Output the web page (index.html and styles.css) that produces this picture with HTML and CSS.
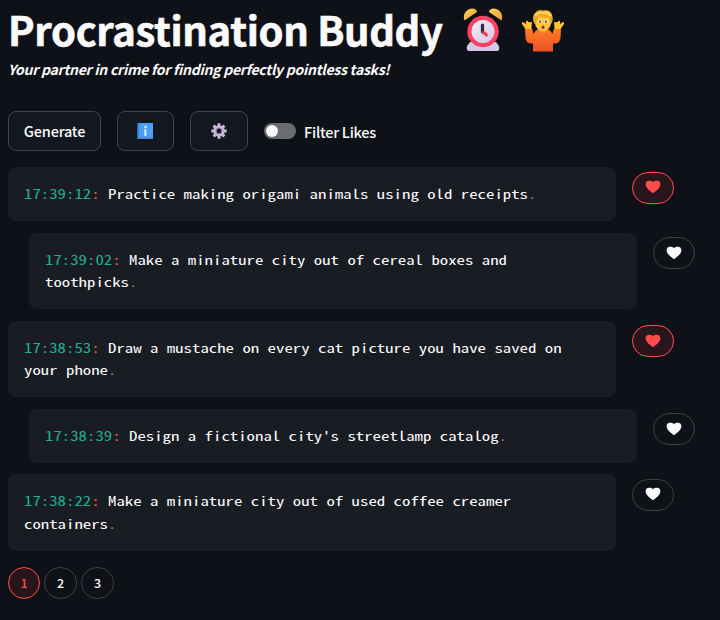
FILE: index.html
```html
<!DOCTYPE html>
<html lang="en">
<head>
<meta charset="utf-8">
<title>Procrastination Buddy</title>
<link rel="stylesheet" href="styles.css">
</head>
<body>
<svg class="defs" width="0" height="0" aria-hidden="true">
  <symbol id="heart" viewBox="0 0 16 14"><path d="M8 13.200C6.800 12 .6 8.600 .6 4.200C.6 1.900 2.200 .8 4 .8C5.800 .8 7.200 1.200 8 2.200C8.800 1.200 10.200 .8 12 .8C13.800 .8 15.400 1.900 15.400 4.200C15.400 8.600 9.200 12 8 13.200Z" fill="currentColor"/></symbol>
</svg>
<header class="header">
  <h1 class="title"><span class="title-text">Procrastination Buddy</span>
    <svg class="clock" viewBox="0 0 40 44">
      <defs>
        <linearGradient id="gold" x1="0" y1="0" x2="1" y2="1"><stop offset="0" stop-color="#ffd55a"/><stop offset="1" stop-color="#e99b32"/></linearGradient>
        <linearGradient id="face" x1="0" y1="0" x2="1" y2="1"><stop offset="0" stop-color="#f5eefb"/><stop offset="1" stop-color="#d3c3df"/></linearGradient>
      </defs>
      <path d="M7 34h26l3 4q1 5-2 5H6q-3 0-2-5z" fill="#d5c6ea"/>
      <path d="M1.500 12.500C-1 6 4 0 10 .5c3 .5 4 2 4 3.500z" fill="url(#gold)"/>
      <path d="M38.500 12.500C41 6 36 0 30 .5c-3 .5-4 2-4 3.500z" fill="url(#gold)"/>
      <circle cx="20" cy="23.500" r="15.700" fill="#f94163"/>
      <circle cx="20" cy="23.500" r="11.500" fill="url(#face)"/>
      <path d="M19.500 17v7" stroke="#33244d" stroke-width="3.200" stroke-linecap="round"/>
      <path d="M20.500 24.500l3 2.500" stroke="#ef3d58" stroke-width="3" stroke-linecap="round"/>
    </svg>
    <svg class="shrug" viewBox="0 0 44 42">
      <defs><linearGradient id="shirt" x1="0" y1="0" x2="0" y2="1"><stop offset="0" stop-color="#ff7c22"/><stop offset="1" stop-color="#ed512a"/></linearGradient></defs>
      <path d="M4 18.500h7l1.500 5.500q3-5.500 7-5.500h5q4 0 7 5.500l1.500-5.500h7l-.5 9.500q-.5 6-7.500 5.500v8H12v-8q-7 .5-7.500-5.500z" fill="url(#shirt)"/>
      <path d="M4.500 19L1 14q-.5-2 1-2l3 2V11q2-1 2 1l4 .2-.7 6.800zM39.500 19L43 14q.5-2-1-2l-3 2V11q-2-1-2 1l-4 .2.700 6.800z" fill="#ffc32e"/>
      <path d="M18 18h8v3q-4 4-8 0z" fill="#e79b21"/>
      <ellipse cx="22" cy="12.500" rx="8" ry="8.500" fill="#ffc83a"/>
      <path d="M13.500 14Q10 7 14 3q3-4 8-2.500 6-1.500 8.500 3 2.500 5 0 10.500l-1.500-6q-8 0-11-2-1 5-4.500 8z" fill="#eaa82e"/>
      <path d="M14 5.500q4-4 8-2.500 5-1.500 8 3" fill="none" stroke="#ffd057" stroke-width="2.500"/>
      <circle cx="18.800" cy="11.500" r="1.700" fill="#fff"/><circle cx="25.200" cy="11.500" r="1.700" fill="#fff"/>
      <circle cx="19" cy="11.700" r="1.100" fill="#57304c"/><circle cx="25" cy="11.700" r="1.100" fill="#57304c"/>
      <ellipse cx="22" cy="17.300" rx="1.500" ry="1.800" fill="#a9223a"/>
    </svg>
  </h1>
  <p class="tagline">Your partner in crime for finding perfectly pointless tasks!</p>
</header>
<div class="toolbar">
  <button class="btn generate"><span class="label">Generate</span></button>
  <button class="btn info" aria-label="Info"><svg width="16" height="16" viewBox="0 0 16 16"><path d="M0 0h16v16H0z" fill="#4d9ff5"/><path d="M0 0h1.500v16H0z" fill="#2867b5"/><path d="M1.500 14.500H16V16H1.500z" fill="#4685e8"/><circle cx="8.500" cy="4" r="1.200" fill="#edf4ff"/><path d="M7 6.500h2.300v6.500H7.500V7.500H7z" fill="#edf4ff"/></svg></button>
  <button class="btn settings" aria-label="Settings"><svg width="16" height="16" viewBox="-8 -8 16 16"><g stroke="#c7b6d8" stroke-width="3"><path d="M0-7.700V7.700M-7.700 0H7.700M-5.400-5.400L5.400 5.400M5.400-5.400L-5.400 5.400"/></g><circle r="5.800" fill="#c7b6d8"/><circle r="3.200" fill="#8b779a"/><circle r="2.200" fill="#131720"/></svg></button>
  <label class="filter"><span class="switch"></span><span class="label">Filter Likes</span></label>
</div>
<main class="tasks">
  <div class="task"><div class="card"><p class="line"><span class="time">17:39:12</span><span class="colon">:</span> Practice making origami animals using old receipts<span class="dot">.</span></p></div><button class="like liked" aria-label="Unlike"><svg><use href="#heart"/></svg></button></div>
  <div class="task indent"><div class="card"><p class="line"><span class="time">17:39:02</span><span class="colon">:</span> Make a miniature city out of cereal boxes and<br>toothpicks<span class="dot">.</span></p></div><button class="like" aria-label="Like"><svg><use href="#heart"/></svg></button></div>
  <div class="task"><div class="card"><p class="line"><span class="time">17:38:53</span><span class="colon">:</span> Draw a mustache on every cat picture you have saved on<br>your phone<span class="dot">.</span></p></div><button class="like liked" aria-label="Unlike"><svg><use href="#heart"/></svg></button></div>
  <div class="task indent"><div class="card"><p class="line"><span class="time">17:38:39</span><span class="colon">:</span> Design a fictional city's streetlamp catalog<span class="dot">.</span></p></div><button class="like" aria-label="Like"><svg><use href="#heart"/></svg></button></div>
  <div class="task"><div class="card"><p class="line"><span class="time">17:38:22</span><span class="colon">:</span> Make a miniature city out of used coffee creamer<br>containers<span class="dot">.</span></p></div><button class="like" aria-label="Like"><svg><use href="#heart"/></svg></button></div>
</main>
<nav class="pages"><button class="page current">1</button><button class="page">2</button><button class="page">3</button></nav>
</body>
</html>
```
FILE: styles.css
```css
* { box-sizing: border-box; }
body {
  margin: 0;
  padding: 0 8px;
  height: 620px;
  overflow: hidden;
  background: #0e1117;
  color: #fafafa;
  font-family: "Noto Sans CJK SC", sans-serif;
}
button { font: inherit; color: inherit; padding: 0; }
svg { display: block; flex: none; }
.defs { position: absolute; }
.header { height: 111px; }
.title { display: flex; margin: 0; height: 59px; line-height: 59px; font-size: 40px; font-weight: 700; letter-spacing: -0.350px; white-space: nowrap; }
.title-text { width: 455px; -webkit-text-stroke: 0.600px #fafafa; }
.clock { width: 40px; height: 44px; margin-top: 8px; }
.shrug { width: 44px; height: 42px; margin: 10px 0 0 18px; }
.tagline { margin: 0; height: 20px; line-height: 20px; font-size: 14px; font-weight: 700; font-style: italic; letter-spacing: -0.260px; white-space: nowrap; }
.toolbar { display: flex; height: 40px; align-items: center; gap: 16px; font-size: 14.500px; font-weight: 500; }
.label { padding-bottom: 1px; letter-spacing: -0.200px; }
.btn { display: flex; align-items: center; justify-content: center; height: 40px; border: 1px solid #41444c; border-radius: 8px; background: #131720; }
.btn svg { margin: 0 1px 1px 0; }
.generate { width: 93px; }
.info { width: 57px; }
.settings { width: 58px; }
.filter { display: flex; align-items: center; gap: 8px; white-space: nowrap; }
.filter .label { letter-spacing: -0.250px; padding-bottom: 0; }
.switch { width: 32px; height: 16px; border-radius: 8px; background: #6b6c70; padding: 2px; }
.switch::before { content: ""; display: block; width: 12px; height: 12px; border-radius: 50%; background: #fafafa; }
.tasks { display: flex; flex-direction: column; gap: 11.200px; margin-top: 16px; }
.task { display: flex; align-items: flex-start; gap: 16px; }
.indent { margin-left: 21px; }
.card { width: 608px; padding: 16px; border-radius: 8px; background: #1a1c24; }
.line { width: 77%; margin: 0; font: 13px/22.400px "Noto Sans Mono CJK SC", "DejaVu Sans Mono", monospace; white-space: nowrap; transform: scaleX(1.2923); transform-origin: 0 0; }
.time { color: #21ad92; }
.colon { color: #f06a28; }
.dot { color: #7f838c; }
.like { display: flex; align-items: center; justify-content: center; width: 42px; height: 32px; margin-top: 4.500px; border: 1px solid #3e4045; border-radius: 16px; background: #0e1117; }
.like svg { width: 16px; height: 14px; margin-bottom: 1px; }
.liked { border-color: #ff4b4b; background: #29161c; color: #ff4b4b; }
.pages { display: flex; gap: 4px; margin-top: 16px; }
.page { width: 33px; height: 32px; border: 1px solid #3e4045; border-radius: 16px; background: #0e1117; font-size: 12.500px; font-weight: 500; line-height: 30px; }
.current { width: 32px; border-color: #ff4b4b; background: #29161c; color: #ff4b4b; }
```
